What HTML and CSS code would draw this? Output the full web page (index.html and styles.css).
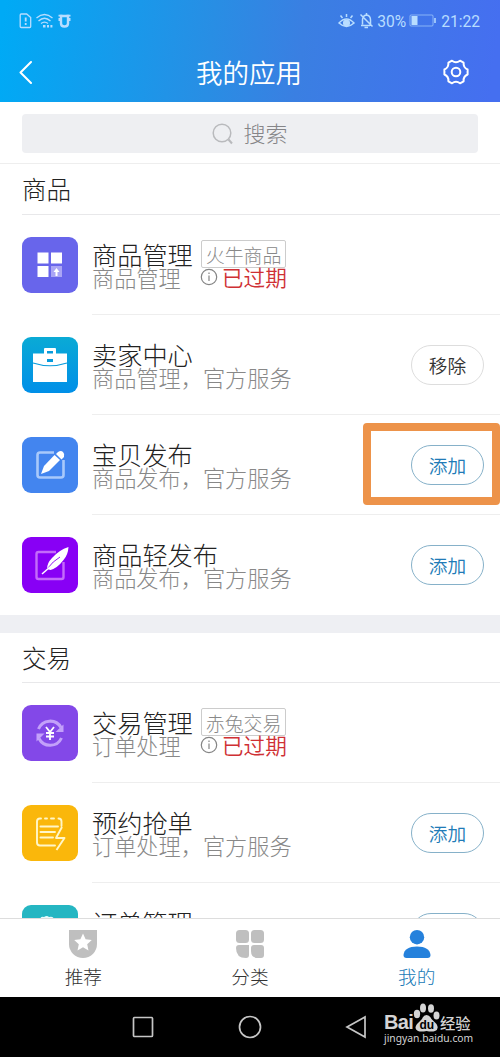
FILE: index.html
```html
<!DOCTYPE html>
<html lang="zh-CN">
<head>
<meta charset="utf-8">
<title>我的应用</title>
<link rel="stylesheet" href="styles.css">
</head>
<body>
<div class="phone">
  <header class="header">
    <div class="status">
      <svg class="status-left" width="54" height="18" viewBox="0 0 54 18" fill="none" stroke="currentColor" stroke-width="1.3">
        <path d="M2.200 2h5.500l4 3.500v9q0 1-1 1h-8.500q-1 0-1-1V3q0-1 1-1z"/><path d="M6.700 5.500v4M6.700 11v2" stroke-width="1.800"/>
        <path d="M17.500 6Q25.500-1 33.500 6M19.500 9q6-5.500 12 0M22 11.600q3.500-3 7 0"/>
        <path d="M24 14.200h2.500M28 14.200h2M31.400 14.200h2" stroke-width="2.500"/>
        <path d="M42 4v7.500q0 3 3.500 3t3.500-3V4z" stroke-width="2.400"/><path d="M39.500 3.600h4M47.500 3.600h4M40.300 6v3M50.700 6v3" stroke-width="1.600"/>
      </svg>
      <div class="status-right">
        <svg width="36" height="18" viewBox="0 0 36 18" fill="none" stroke="currentColor" stroke-width="1.500">
          <path d="M1 11q7.500-8 15 0q-7.500 7-15 0z"/><circle cx="8.500" cy="11" r="2.800" fill="currentColor"/><path d="M8.500 5V2M4.500 6L2.500 3.500M12.500 6l2-2.500"/>
          <path d="M24.500 12.500V8q0-4.500 4-5 4 .5 4 5v4M23 13.500h9M26.500 15.500h3.500M22.500 2.500l12 12M28.500 3V1"/>
        </svg>
        <span class="status-text">30%</span>
        <svg class="battery" width="28" height="14" viewBox="0 0 28 14"><rect x="1" y="1" width="23" height="11" rx="1" fill="none" stroke="currentColor" stroke-opacity=".6"/><rect x="2.500" y="2" width="6" height="9" fill="currentColor"/><path d="M26 4v5" stroke="currentColor" stroke-width="1.500"/></svg>
        <span class="status-text">21:22</span>
      </div>
    </div>
    <div class="titlebar">
      <svg width="16" height="24" viewBox="0 0 16 24" fill="none" stroke="currentColor" stroke-width="2" stroke-linecap="round" stroke-linejoin="round"><path d="M12 2L1.500 12.500l10.500 10.500"/></svg>
      <h1 class="page-title">我的应用</h1>
      <svg width="26" height="26" viewBox="0 0 26 26" fill="none" stroke="currentColor" stroke-width="2" stroke-linejoin="round"><path d="M9 1.700Q13 4.800 17 1.700L20.600 3.700Q20.200 8.800 24.600 10.500V15.500Q20.200 17.200 20.600 22.300L17 24.300Q13 21.200 9 24.300L5.400 22.300Q5.800 17.200 1.400 15.500V10.500Q5.800 8.800 5.400 3.700Z"/><circle cx="13" cy="13" r="4.300"/></svg>
    </div>
  </header>

  <main class="content">
    <div class="search-wrap">
      <div class="search">
        <svg width="22" height="22" viewBox="0 0 22 22" fill="none" stroke="#b9babd" stroke-width="1.500"><circle cx="10" cy="10" r="8.800"/><path d="M16.500 16.500l3.500 4" stroke-width="2"/></svg>
        <span>搜索</span>
      </div>
    </div>

    <section class="group">
      <h2 class="group-title">商品</h2>
      <article class="row">
        <svg class="app-icon" viewBox="0 0 56 56"><rect width="56" height="56" rx="9" fill="#6865eb"/><path d="M15.500 15.500h11v11h-11zM29 15.500h11v11H29zM15.500 29h11v11h-11z" fill="#fff"/><path d="M29 29h11v11H29z" fill="#aaa5f5"/><path d="M34.500 31l3 4h-2v4h-2v-4h-2z" fill="#fff"/></svg>
        <div class="info">
          <div class="name">商品管理<span class="tag">火牛商品</span></div>
          <div class="desc">商品管理<span class="expired"><svg class="hint" viewBox="0 0 18 18"><circle cx="9" cy="9" r="7.700"/><path d="M9 7.500V13M9 4.500v1.500"/></svg>已过期</span></div>
        </div>
      </article>
      <article class="row">
        <svg class="app-icon" viewBox="0 0 56 56"><defs><linearGradient id="sea" x2="0" y2="1"><stop stop-color="#0aaad5"/><stop offset="1" stop-color="#008fe8"/></linearGradient></defs><rect width="56" height="56" rx="9" fill="url(#sea)"/><path d="M11 16.500h11V12q0-1 1-1h10q1 0 1 1v4.500h11V45H11z" fill="#fff"/><path d="M25 14h6v2.500h-6zM25 22h6v3h-6z" fill="#079bdc"/><path d="M11 26q17 5.500 34 0" fill="none" stroke="#079bdc" stroke-width="1.200"/></svg>
        <div class="info"><div class="name">卖家中心</div><div class="desc">商品管理，官方服务</div></div>
        <button class="btn btn-remove">移除</button>
      </article>
      <article class="row row-marked">
        <svg class="app-icon" viewBox="0 0 56 56"><rect width="56" height="56" rx="9" fill="#4385ef"/><path d="M32 15.500H18q-2.500 0-2.500 2.500v20q0 2.500 2.500 2.500h21q2.500 0 2.500-2.500V23" fill="none" stroke="#a9c9fb" stroke-width="2.600"/><path d="M19 37l3-8L32.500 18l5.500 5L27 34z" fill="#fff"/><path d="M34 17l2-2q3-2 5 0t1 5l-2.500 2.500z" fill="#fff"/></svg>
        <div class="info"><div class="name">宝贝发布</div><div class="desc">商品发布，官方服务</div></div>
        <button class="btn">添加</button>
      </article>
      <article class="row">
        <svg class="app-icon" viewBox="0 0 56 56"><rect width="56" height="56" rx="9" fill="#8800f5"/><path d="M34 15H16.500q-2 0-2 2v23q0 2 2 2h23q2 0 2-2V25" fill="none" stroke="#c46bfa" stroke-width="2.400"/><path d="M25 32q0-6 5-11 7-8 16.500-11-.5 8-5 13-6 8-13 10z" fill="#fff"/><path d="M25 32q6-8 13-12" fill="none" stroke="#8800f5" stroke-width=".9"/><path d="M20 37l8-7" stroke="#fff" stroke-width="1.500"/></svg>
        <div class="info"><div class="name">商品轻发布</div><div class="desc">商品发布，官方服务</div></div>
        <button class="btn">添加</button>
      </article>
    </section>

    <section class="group group-next">
      <h2 class="group-title">交易</h2>
      <article class="row">
        <svg class="app-icon" viewBox="0 0 56 56"><rect width="56" height="56" rx="9" fill="#8348e8"/><path d="M16.500 24A12.500 12.500 0 0 1 39 22.500M39.500 33A12.500 12.500 0 0 1 17 33.500" fill="none" stroke="#c3a0fa" stroke-width="3"/><path d="M41.500 19.500v7.500h-8zM14.500 36.500V28.500h8z" fill="#c3a0fa"/><path d="M24 22l4 5 4-5M28 27v8M24 28h8M24 31.500h8" fill="none" stroke="#fff" stroke-width="1.800"/></svg>
        <div class="info">
          <div class="name">交易管理<span class="tag">赤兔交易</span></div>
          <div class="desc">订单处理<span class="expired"><svg class="hint" viewBox="0 0 18 18"><circle cx="9" cy="9" r="7.700"/><path d="M9 7.500V13M9 4.500v1.500"/></svg>已过期</span></div>
        </div>
      </article>
      <article class="row">
        <svg class="app-icon" viewBox="0 0 56 56"><rect width="56" height="56" rx="9" fill="#fab70b"/><path d="M19 13.500h-1q-3 0-3 3v21q0 3 3 3h15M36.500 13.500q3 0 3 3v4.500M23 13.500h2M29 13.500h3M18.500 21.500H36M18.500 27H33M18.500 32.500H31" fill="none" stroke="#fff6c8" stroke-width="1.900" stroke-linecap="round"/><path d="M40 22l-6 11h8.500L34.500 45" fill="none" stroke="#fff6c8" stroke-width="1.900" stroke-linejoin="round"/></svg>
        <div class="info"><div class="name">预约抢单</div><div class="desc">订单处理，官方服务</div></div>
        <button class="btn">添加</button>
      </article>
      <article class="row">
        <svg class="app-icon" viewBox="0 0 56 56"><rect width="56" height="56" rx="9" fill="#25b6c2"/><path d="M18 14q1-3 4-2 3-2 5 0 4-1 5 2v20H18z" fill="#e8fbfc"/></svg>
        <div class="info"><div class="name">订单管理</div></div>
        <button class="btn" aria-label="添加"></button>
      </article>
    </section>
  </main>

  <nav class="tabs">
    <div class="tab"><svg width="28" height="28" viewBox="0 0 28 28"><path d="M0 0h28v14a14 14 0 0 1-28 0z" fill="#bfbfbf"/><path d="M14 3.500l2.600 5.800 6.200.7-4.600 4.200 1.300 6.300-5.500-3.200-5.500 3.200 1.300-6.300L5.200 10l6.200-.7z" fill="#fff"/></svg><span>推荐</span></div>
    <div class="tab"><svg width="28" height="28" viewBox="0 0 28 28" fill="#bfbfbf"><rect width="13" height="13" rx="3.500"/><rect x="15" width="13" height="13" rx="3.500"/><path d="M3 15h10v10q0 3-3 3-10 0-10-10 0-3 3-3zM18 15h7q3 0 3 3v7q0 3-3 3h-3q-7 0-7-7v-3q0-3 3-3z"/></svg><span>分类</span></div>
    <div class="tab tab-active"><svg width="28" height="28" viewBox="0 0 28 28" fill="#2581dc"><circle cx="14" cy="7.200" r="7.200"/><path d="M.5 25q1-8.500 13.500-8.500T27.500 25q0 3-3 3h-21q-3 0-3-3z"/></svg><span>我的</span></div>
  </nav>

  <footer class="system">
    <svg class="keys" width="240" height="26" viewBox="0 0 240 26" fill="none" stroke="#c6c6c6" stroke-width="1.700"><rect x="1.500" y="3.500" width="19" height="19" rx="1"/><circle cx="118" cy="13" r="10.500"/><path d="M233 3v20l-18-10z"/></svg>
    <div class="brand">
      <div class="brand-line">
        <span class="bai">Bai</span>
        <svg class="paw" width="27" height="30" viewBox="0 0 27 30" fill="#d4d4d4"><ellipse cx="4" cy="11" rx="3.200" ry="4.200"/><ellipse cx="10" cy="5" rx="3" ry="4.500"/><ellipse cx="18" cy="5.500" rx="3" ry="4.200"/><ellipse cx="23.500" cy="12.500" rx="3" ry="4"/><path d="M13.500 12q3 0 5 4l5 5q3 5-1.500 7-3 1-8.500 0-5.500 1-8.500 0-4.500-2-1-7l5-5q1.500-4 4.500-4z"/><text x="6.500" y="25.500" class="du">du</text></svg>
        <span class="jingyan">经验</span>
      </div>
      <div class="brand-url">jingyan.baidu.com</div>
    </div>
  </footer>
</div>
</body>
</html>
```

FILE: styles.css
```css
*, *::before, *::after { box-sizing: border-box; }
body { margin: 0; font-family: "Noto Sans CJK SC", sans-serif; font-weight: 300; color: #222; }
.phone { width: 500px; height: 1057px; display: flex; flex-direction: column; overflow: hidden; background: #fff; }

.header { height: 102px; flex: none; color: #fff; background: linear-gradient(97deg, #00aaf5 1%, #288ee4 42%, #3a7fe2 60%, #456ff0 98%); }
.status { height: 42px; padding: 0 20px 0 19px; display: flex; align-items: center; justify-content: space-between; color: #b8ddff; }
.status-right { display: flex; align-items: center; }
.status-text { font: 400 15.600px/20px Roboto, sans-serif; margin-left: 3px; padding-top: 1px; }
.battery { margin: 0 1px 0 3px; }
.titlebar { height: 60px; padding: 0 31px 0 19px; display: flex; align-items: center; justify-content: space-between; }
.page-title { margin: 0 0 0 20px; font-size: 26.500px; font-weight: 350; line-height: 30px; }

.content { flex: 1; min-height: 0; overflow: hidden; }
.search-wrap { height: 62px; padding: 12px 22px 0; border-bottom: 1px solid #eee; }
.search { height: 39px; border-radius: 4px; background: #eeeff2; display: flex; align-items: center; justify-content: center; gap: 9px; font-size: 22px; line-height: 30px; color: #858588; }
.search span { margin-top: -3px; }

.group-next { border-top: 18px solid #eeeff3; }
.group-title { height: 51px; margin: 0 0 0 22px; border-bottom: 1px solid #e8e8ea; font-size: 24.500px; font-weight: 300; line-height: 50px; }
.group-next .group-title { height: 50px; }
.row { position: relative; height: 100px; margin-left: 22px; padding-right: 16px; display: flex; align-items: flex-start; }
.row::after { content: ""; position: absolute; left: 70px; right: 0; bottom: 0; border-bottom: 1px solid #eee; }
.group .row:last-child::after { display: none; }
.app-icon { width: 56px; height: 56px; margin: 22px 14px 0 0; flex: none; }
.info { flex: 1; padding-top: 27px; white-space: nowrap; }
.name { height: 25px; display: flex; align-items: center; font-size: 25.200px; line-height: 25px; }
.desc { height: 22px; margin-top: -1px; display: flex; align-items: center; font-size: 22.200px; line-height: 22px; color: #888; }
.tag { height: 28px; margin: 0 0 1px 8px; padding: 0 4px; border: 1px solid #ccc; border-radius: 2px; font-size: 18.900px; line-height: 27px; color: #888; }
.expired { margin-left: 19px; display: flex; align-items: center; color: #cf3034; font-size: 21.700px; font-weight: 350; }
.hint { width: 18px; height: 18px; margin-right: 4px; fill: none; stroke: #858585; stroke-width: 1.200; }
.btn { width: 73px; height: 40px; margin-top: 30px; padding: 0; border: 1px solid #86b1c9; border-radius: 20px; background: #fff; color: #217bb7; font: 350 18.700px/36px "Noto Sans CJK SC", sans-serif; }
.btn-remove { border-color: #ddd; color: #333; }
.row-marked::before { content: ""; position: absolute; top: 8px; right: 0; width: 137px; height: 82px; border: 8px solid #ed934a; border-radius: 4px; }

.tabs { height: 79px; flex: none; display: grid; grid-template-columns: repeat(3, 1fr); border-top: 1px solid #ddd; background: #fff; }
.tab { padding-top: 11px; display: flex; flex-direction: column; align-items: center; gap: 5px; font-size: 18.700px; line-height: 26px; color: #333; }
.tab-active { color: #217bb7; }

.system { height: 60px; flex: none; display: flex; background: #000; }
.keys { margin: 17px 12px 0 132px; flex: none; }
.brand { padding-top: 5px; color: #d4d4d4; }
.brand-line { height: 30px; display: flex; align-items: flex-start; }
.bai { width: 29px; font: 700 20px/30px "Liberation Sans", sans-serif; margin-top: 5px; letter-spacing: -.6px; }
.paw { margin-top: 1px; }
.du { font: 700 12px "Liberation Sans", sans-serif; fill: #000; }
.jingyan { margin-top: 7px; font-size: 15.300px; line-height: 26px; font-weight: 500; }
.brand-url { margin-top: -1px; font: 400 10.300px/14px "Noto Sans", sans-serif; }
```
